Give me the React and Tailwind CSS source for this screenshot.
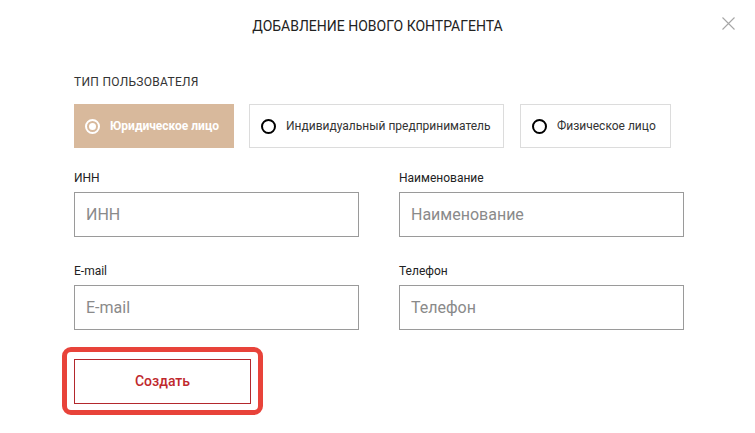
import { useState } from 'react'

const TYPES = [
  { id: 'legal', label: 'Юридическое лицо', width: 'w-[160px]' },
  { id: 'ip', label: 'Индивидуальный предприниматель', width: 'w-[255px]' },
  { id: 'person', label: 'Физическое лицо', width: 'w-[151px]' },
]

const FIELDS = [
  { id: 'inn', label: 'ИНН' },
  { id: 'name', label: 'Наименование' },
  { id: 'email', label: 'E-mail' },
  { id: 'phone', label: 'Телефон' },
]

function Radio({ checked }) {
  if (checked) {
    return (
      <span className="w-[15px] h-[15px] rounded-full border-2 border-white flex items-center justify-center flex-shrink-0">
        <span className="w-[7px] h-[7px] rounded-full bg-white" />
      </span>
    )
  }
  return <span className="w-[15px] h-[15px] rounded-full border-2 border-black flex-shrink-0" />
}

export default function App() {
  const [type, setType] = useState('legal')

  return (
    <div className="relative w-[755px] h-[433px] bg-white overflow-hidden font-['Roboto','Liberation_Sans',sans-serif]">
      {/* close */}
      <button aria-label="Закрыть" className="absolute left-[721px] top-[16px] w-[15px] h-[15px] flex items-center justify-center">
        <svg width="13" height="13" viewBox="0 0 13 13" fill="none" stroke="#a6a6a6" strokeWidth="1.1">
          <path d="M0.5 0.5l12 12M12.5 0.5l-12 12" />
        </svg>
      </button>

      <h1 className="pt-[16px] text-center text-[14px] leading-[20px] text-[#222]">
        ДОБАВЛЕНИЕ НОВОГО КОНТРАГЕНТА
      </h1>

      <div className="px-[74px]">
        <div className="mt-[38px] text-[12px] leading-[16px] tracking-[0.3px] text-[#333]">ТИП ПОЛЬЗОВАТЕЛЯ</div>

        <div className="mt-[14px] flex">
          {TYPES.map((t, i) => {
            const active = t.id === type
            return (
              <button
                key={t.id}
                onClick={() => setType(t.id)}
                className={
                  'h-[44px] flex items-center gap-[10px] pl-[11px] text-[12px] ' +
                  t.width +
                  (i === 1 ? ' ml-[15px] mr-[16px]' : '') +
                  (active
                    ? ' bg-[#d8b99c] text-white font-bold'
                    : ' bg-white border border-[#dcdcdc] text-[#333]')
                }
              >
                <Radio checked={active} />
                <span>{t.label}</span>
              </button>
            )
          })}
        </div>

        <div className="mt-[22px] grid grid-cols-[285px_285px] gap-x-[40px] gap-y-[26px]">
          {FIELDS.map(f => (
            <div key={f.id}>
              <label className="block text-[12px] leading-[16px] text-[#222] mb-[6px]">{f.label}</label>
              <input
                placeholder={f.label}
                className="w-full h-[45px] border border-[#9a9a9a] px-[11px] text-[16px] text-[#333] placeholder:text-[#8a8a8a] outline-none"
              />
            </div>
          ))}
        </div>

        <div className="relative mt-[29px] w-[177px]">
          <button className="w-full h-[45px] border border-[#b3282d] text-[14px] font-medium text-[#c0282d]">
            Создать
          </button>
          {/* highlight annotation */}
          <div className="absolute -left-[12px] -top-[12px] -right-[12px] -bottom-[11px] border-[5px] border-[#e8433a] rounded-[9px] pointer-events-none" />
        </div>
      </div>
    </div>
  )
}
